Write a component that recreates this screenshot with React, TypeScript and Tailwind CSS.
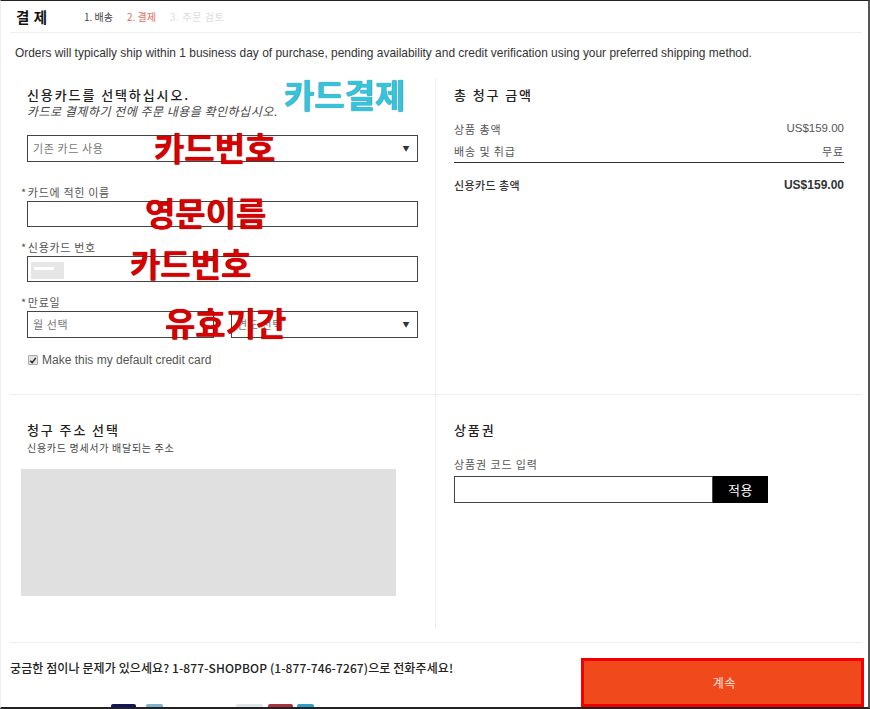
import React from 'react';

const kr = "font-['Noto_Sans_CJK_KR','Liberation_Sans',sans-serif]";
const heading = 'text-[13px] font-medium leading-[17px] tracking-[1.9px] text-[#222]';

const Arrow = () => <span className="text-[7px] leading-none text-[#333]">▼</span>;

const Field = ({ label, children }: { label: string; children?: React.ReactNode }) => (
  <div>
    <div className="-ml-[6px] h-[19px] text-[11px] leading-[20px] tracking-[0.7px] text-[#555]">
      <span className="mr-[1px]">*</span>
      {label}
    </div>
    <div className="h-[26px] w-[391px] border border-[#444] bg-white">{children}</div>
  </div>
);

const Overlay = ({ text, className }: { text: string; className: string }) => (
  <span className={`absolute whitespace-nowrap text-[33px] font-bold leading-none ${className}`}>{text}</span>
);

export default function App() {
  return (
    <div className={`relative flex h-[709px] w-[870px] flex-col overflow-hidden border-t border-b-2 border-r-2 border-l border-t-[#222] border-b-[#222] border-r-[#555] border-l-[#eee] bg-white text-[#333] ${kr}`}>
      {/* Header */}
      <div className="ml-[9px] mr-[6px] flex h-[32px] items-center border-b border-[#eee] pl-[6px]">
        <h1 className="w-[68px] text-[14.5px] font-bold tracking-[0.5px] text-[#111]">결 제</h1>
        <div className="flex gap-[14px] text-[10px] text-[#444]">
          <span>1. 배송</span>
          <span className="text-[#e0705a]">2. 결제</span>
          <span className="tracking-[0.6px] text-[#dddddd]">3. 주문 검토</span>
        </div>
      </div>

      <p className="ml-[14px] mt-[12px] h-[33px] font-['Liberation_Sans',sans-serif] text-[11.93px] leading-[16px] text-[#333]">
        Orders will typically ship within 1 business day of purchase, pending availability and credit verification using your preferred shipping method.
      </p>

      {/* Payment + summary */}
      <div className="ml-[9px] mr-[6px] flex h-[317px] border-b border-[#eee]">
        <div className="w-[426px] border-r border-[#eee] pl-[17px] pt-[8px]">
          <h2 className={heading}>신용카드를 선택하십시오.</h2>
          <p className="text-[12px] italic leading-[15px] tracking-[0.5px] text-[#444]">카드로 결제하기 전에 주문 내용을 확인하십시오.</p>
          <div className="mt-[17px] flex h-[27px] w-[391px] items-center justify-between border border-[#444] pl-[5px] pr-[7px] text-[11px] tracking-[0.6px] text-[#777]">
            <span>기존 카드 사용</span>
            <Arrow />
          </div>
          <div className="mt-[20px] flex flex-col gap-[10px]">
            <Field label="카드에 적힌 이름" />
            <Field label="신용카드 번호">
              <div className="ml-[3px] mt-[2px] h-[20px] w-[33px] bg-[#e6e6e6]">
                <div className="h-[3px] bg-white" />
                <div className="ml-[3px] mt-[5px] h-[3px] w-[20px] bg-white" />
              </div>
            </Field>
            <div>
              <div className="-ml-[6px] h-[19px] text-[11px] leading-[20px] tracking-[0.7px] text-[#555]">
                <span className="mr-[1px]">*</span>만료일
              </div>
              <div className="flex h-[27px] w-[391px] gap-[17px] text-[11px] tracking-[0.6px] text-[#777]">
                <div className="flex w-[187px] items-center border border-[#444] pl-[5px]">월 선택</div>
                <div className="flex w-[187px] items-center justify-between border border-[#444] pl-[5px] pr-[7px]">
                  <span>연도 선택</span>
                  <Arrow />
                </div>
              </div>
            </div>
          </div>
          <label className="ml-[1px] mt-[13px] flex items-center gap-[4px] font-['Liberation_Sans',sans-serif] text-[12px] text-[#555]">
            <span className="flex h-[10px] w-[10px] items-center justify-center rounded-[1px] border border-[#aaa] bg-[#e4e4e4]">
              <svg viewBox="0 0 10 10" className="h-[9px] w-[9px]" fill="none" stroke="#222" strokeWidth={1.8} aria-hidden="true">
                <path d="M1.5 5.2 4 7.8 8.5 1.8" />
              </svg>
            </span>
            Make this my default credit card
          </label>
        </div>

        <div className="flex-1 pl-[18px] pr-[18px] pt-[8px]">
          <h2 className={heading}>총 청구 금액</h2>
          <div className="mt-[15px] flex h-[22px] items-center justify-between text-[11px] tracking-[0.9px] text-[#555]">
            <span>상품 총액</span>
            <span className="font-['Liberation_Sans',sans-serif] text-[11.5px] tracking-normal">US$159.00</span>
          </div>
          <div className="flex h-[23px] items-center justify-between border-b border-[#333] pt-[1px] text-[11px] tracking-[0.9px] text-[#555]">
            <span>배송 및 취급</span>
            <span>무료</span>
          </div>
          <div className="mt-[11px] flex h-[22px] items-center justify-between text-[11px] font-medium tracking-[0.4px] text-[#333]">
            <span>신용카드 총액</span>
            <span className="font-['Liberation_Sans',sans-serif] text-[12px] font-bold tracking-normal">US$159.00</span>
          </div>
        </div>
      </div>

      {/* Billing + gift */}
      <div className="ml-[9px] mr-[6px] flex h-[247px]">
        <div className="h-[233px] w-[426px] border-r border-[#eee] pl-[11px] pt-[26px]">
          <h2 className={`pl-[6px] ${heading}`}>청구 주소 선택</h2>
          <p className="mt-[2px] pl-[6px] text-[10px] leading-[15px] tracking-[0.7px] text-[#444]">신용카드 명세서가 배달되는 주소</p>
          <div className="mt-[14px] h-[127px] w-[375px] bg-[#e0e0e0]" />
        </div>
        <div className="flex-1 pl-[18px] pt-[26px]">
          <h2 className={heading}>상품권</h2>
          <div className="mt-[18px] h-[20px] text-[11px] leading-[16px] tracking-[0.9px] text-[#555]">상품권 코드 입력</div>
          <div className="flex h-[27px] w-[314px]">
            <div className="w-[259px] border border-[#444]" />
            <div className="flex w-[55px] items-center justify-center bg-black text-[13px] tracking-[0.6px] text-white">적용</div>
          </div>
        </div>
      </div>

      {/* Footer */}
      <div className="ml-[9px] mr-[6px] flex flex-1 flex-col border-t border-[#eee] pt-[15px]">
        <p className="text-[12px] font-medium leading-[20px] tracking-[0.1px] text-[#222]">
          궁금한 점이나 문제가 있으세요? 1-877-SHOPBOP (1-877-746-7267)으로 전화주세요!
        </p>
        {/* card logos, mostly cut off by the screenshot */}
        <div className="mt-auto flex h-[3px] pl-[101px]">
          <div className="w-[25px] rounded-t-[2px] bg-[#14145a]" />
          <div className="ml-[10px] w-[17px] rounded-t-[2px] bg-[#7fb3c8]" />
          <div className="ml-[73px] w-[27px] rounded-t-[2px] bg-[#dfe6ea]" />
          <div className="ml-[5px] w-[25px] rounded-t-[2px] bg-[#a8323f]" />
          <div className="ml-[4px] w-[17px] rounded-t-[2px] bg-[#2e9fc9]" />
        </div>
      </div>

      <button className="absolute bottom-0 right-[4px] flex h-[49px] w-[283px] items-center justify-center border-[3px] border-[#f00000] bg-[#f04a1c] pl-[4px] text-[12px] tracking-[0.8px] text-[#ffe4dc]">
        계속
      </button>

      <Overlay text="카드결제" className="left-[283px] top-[77px] text-[#33c4de] [text-shadow:0_0_1px_#0a4a60]" />
      <Overlay text="카드번호" className="left-[153px] top-[130px] text-[#d80000] [text-shadow:0_0_1px_#500000]" />
      <Overlay text="영문이름" className="left-[144px] top-[195px] text-[#d80000] [text-shadow:0_0_1px_#500000]" />
      <Overlay text="카드번호" className="left-[129px] top-[246px] text-[#d80000] [text-shadow:0_0_1px_#500000]" />
      <Overlay text="유효기간" className="left-[164px] top-[305px] text-[#d80000] [text-shadow:0_0_1px_#500000]" />
    </div>
  );
}
